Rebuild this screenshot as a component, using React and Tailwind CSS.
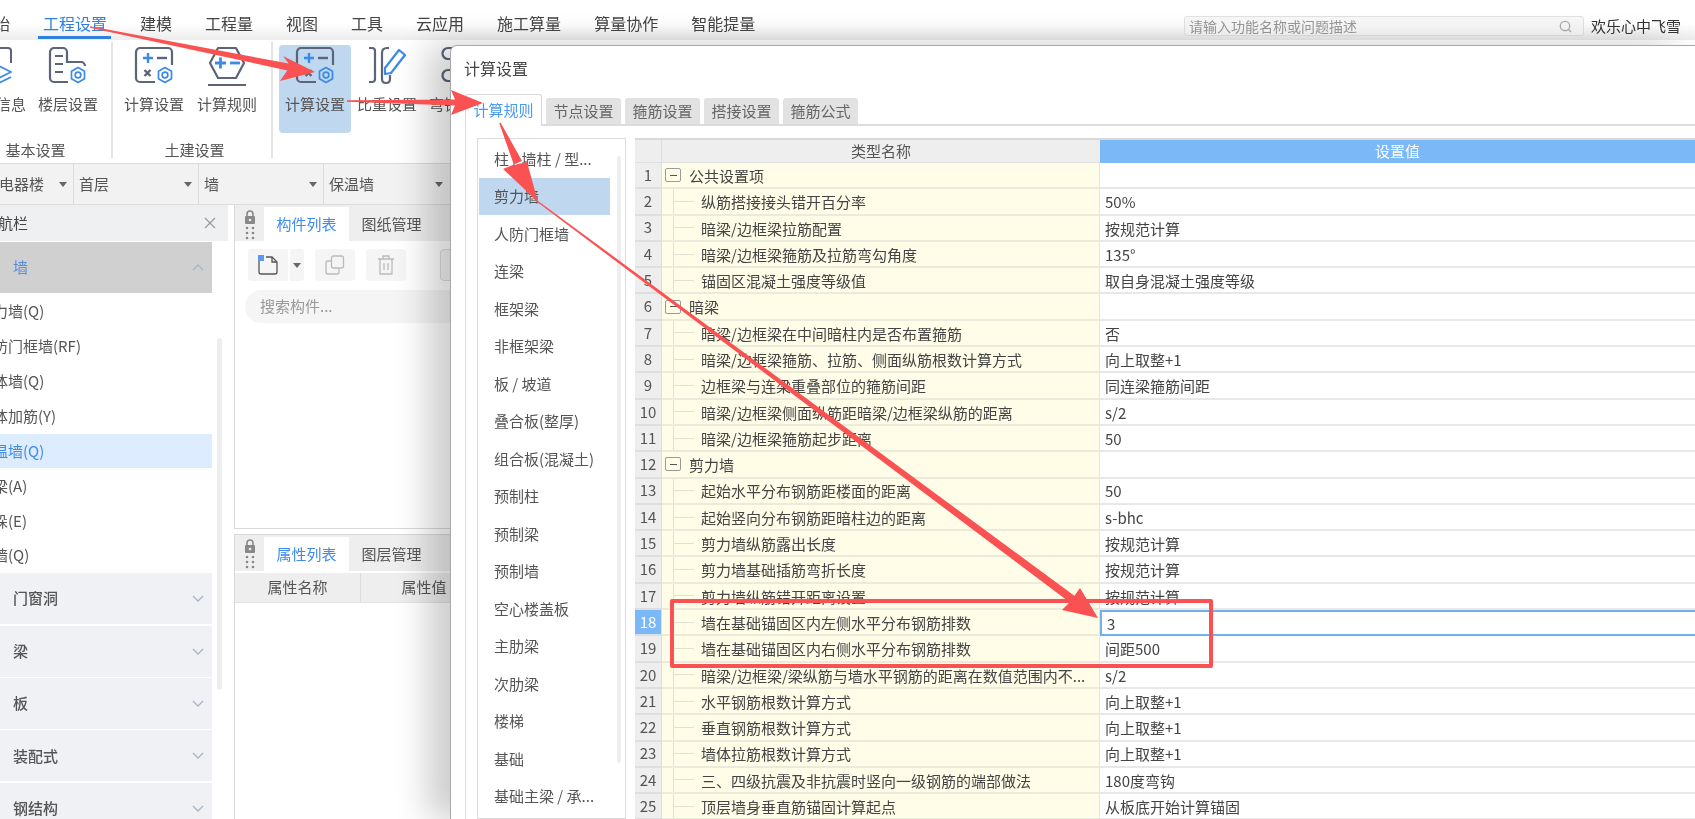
import React from "react";

const FONT = '"Noto Sans CJK SC","Noto Sans",sans-serif';

const gray = "#5c6478";
const blue = "#3b8ae6";

function Gear({ x, y, r = 7.5 }) {
  const pts = [];
  for (let i = 0; i < 6; i++) {
    const a = (Math.PI / 3) * i + Math.PI / 6;
    pts.push(`${(x + r * Math.cos(a)).toFixed(1)},${(y + r * Math.sin(a)).toFixed(1)}`);
  }
  return (
    <g fill="none" stroke={blue} strokeWidth="1.7" strokeLinejoin="round">
      <polygon points={pts.join(" ")} />
      <circle cx={x} cy={y} r={r * 0.38} />
    </g>
  );
}

function IconInfo() {
  return (
    <svg width="40" height="40" viewBox="0 0 40 40" fill="none">
      <path d="M35 17V5a3 3 0 0 0-3-3H18" stroke={gray} strokeWidth="2" />
      <path d="M11 26l12-6 12 6-12 6z" stroke={blue} strokeWidth="1.8" strokeLinejoin="round" />
      <path d="M11 31l12 6 12-6" stroke={blue} strokeWidth="1.8" />
    </svg>
  );
}
function IconFloor() {
  return (
    <svg width="40" height="40" viewBox="0 0 40 40" fill="none">
      <path d="M20 36H6a4 4 0 0 1-4-4V6a4 4 0 0 1 4-4h9a4 4 0 0 1 4 4v10h14a4 4 0 0 1 4 4" stroke={gray} strokeWidth="2.2" />
      <path d="M7 10h8M7 18h8M7 26h8" stroke={gray} strokeWidth="2.2" />
      <Gear x={30} y={29} />
    </svg>
  );
}
function IconCalc() {
  return (
    <svg width="40" height="40" viewBox="0 0 40 40" fill="none">
      <path d="M21 36H6a4 4 0 0 1-4-4V6a4 4 0 0 1 4-4h28a4 4 0 0 1 4 4v13" stroke={gray} strokeWidth="2.2" />
      <path d="M9 12h10M14 7v10" stroke={blue} strokeWidth="2.4" />
      <path d="M23 12h10" stroke={gray} strokeWidth="2.4" />
      <path d="M10.5 24l6 6M16.5 24l-6 6" stroke={gray} strokeWidth="2.4" />
      <Gear x={31} y={29} />
    </svg>
  );
}
function IconRule() {
  return (
    <svg width="40" height="40" viewBox="0 0 40 40" fill="none">
      <path d="M11 2h18l8 15-8 15H11L3 17z" stroke={gray} strokeWidth="2.2" strokeLinejoin="round" />
      <path d="M8 17h11M13.500 11.500v11" stroke={blue} strokeWidth="2.8" />
      <path d="M23 17h10" stroke={blue} strokeWidth="2.8" />
      <path d="M1 39h38" stroke={gray} strokeWidth="2.2" />
    </svg>
  );
}
function IconDensity() {
  return (
    <svg width="40" height="40" viewBox="0 0 40 40" fill="none">
      <path d="M2 2h3c2 0 3 1 3 3v28c0 2-1 3-3 3H2" stroke={gray} strokeWidth="2.2" />
      <path d="M22 2h-2c-3 0-5 2-5 5v26c0 3 2 4 4 4s4-1 4-4v-4" stroke={gray} strokeWidth="2.2" />
      <path d="M18 22L32 4l6 5-14 18-6 1z" stroke={blue} strokeWidth="2.2" strokeLinejoin="round" />
    </svg>
  );
}
function IconHook() {
  return (
    <svg width="40" height="40" viewBox="0 0 40 40" fill="none">
      <path d="M22 2H9a5.500 5.500 0 0 0 0 11h14M22 24H9a5.500 5.500 0 0 0 0 11h14" stroke={gray} strokeWidth="2.2" />
    </svg>
  );
}

function Caret({ className = "" }) {
  return (
    <svg width="8" height="5" viewBox="0 0 8 5" className={className}>
      <path d="M0 0h8L4 5z" fill="#666" />
    </svg>
  );
}

function Lock() {
  return (
    <svg width="12" height="30" viewBox="0 0 12 30" fill="#888">
      <path d="M3 6V4a3 3 0 0 1 6 0v2" fill="none" stroke="#888" strokeWidth="1.6" />
      <rect x="1" y="6" width="10" height="8" rx="1" />
      <circle cx="6" cy="10" r="1.3" fill="#eee" />
      <circle cx="3" cy="18" r="1.3" />
      <circle cx="9" cy="18" r="1.3" />
      <circle cx="3" cy="23" r="1.3" />
      <circle cx="9" cy="23" r="1.3" />
      <circle cx="3" cy="28" r="1.3" />
      <circle cx="9" cy="28" r="1.3" />
    </svg>
  );
}

function RibbonItem({ icon, label, active }) {
  return (
    <div className={`w-[72px] h-[88px] flex flex-col items-center pt-[2px] rounded ${active ? "bg-[#c0d7f0]" : ""}`}>
      <div className="h-[38px] flex items-center justify-center">{icon}</div>
      <div className="mt-[9px] text-[15px] leading-[20px] text-[#555] whitespace-nowrap">{label}</div>
    </div>
  );
}

function RibbonGroup({ label, children, className = "", rowClass = "" }) {
  return (
    <div className={`h-[116px] mt-[2px] border-r-2 border-[#e4e4e4] flex flex-col shrink-0 ${className}`}>
      <div className={`flex mt-[3px] ${rowClass}`}>{children}</div>
      <div className="mt-[7px] text-center text-[15px] leading-[20px] text-[#555] whitespace-nowrap">{label}</div>
    </div>
  );
}

function Chevron({ up }) {
  return (
    <svg width="12" height="7" viewBox="0 0 12 7" fill="none">
      <path d={up ? "M1 6l5-5 5 5" : "M1 1l5 5 5-5"} stroke="#a8b4cc" strokeWidth="1.3" />
    </svg>
  );
}

const navItems = ["剪力墙(Q)", "人防门框墙(RF)", "砌体墙(Q)", "砌体加筋(Y)", "保温墙(Q)", "暗梁(A)", "墙垛(E)", "幕墙(Q)"];
const navGroups = ["门窗洞", "梁", "板", "装配式", "钢结构", "土方"];

const listItems = ["柱 / 墙柱 / 型...", "剪力墙", "人防门框墙", "连梁", "框架梁", "非框架梁", "板 / 坡道", "叠合板(整厚)", "组合板(混凝土)", "预制柱", "预制梁", "预制墙", "空心楼盖板", "主肋梁", "次肋梁", "楼梯", "基础", "基础主梁 / 承..."];

const rows = [
  ["公共设置项", "", true],
  ["纵筋搭接接头错开百分率", "50%"],
  ["暗梁/边框梁拉筋配置", "按规范计算"],
  ["暗梁/边框梁箍筋及拉筋弯勾角度", "135°"],
  ["锚固区混凝土强度等级值", "取自身混凝土强度等级"],
  ["暗梁", "", true],
  ["暗梁/边框梁在中间暗柱内是否布置箍筋", "否"],
  ["暗梁/边框梁箍筋、拉筋、侧面纵筋根数计算方式", "向上取整+1"],
  ["边框梁与连梁重叠部位的箍筋间距", "同连梁箍筋间距"],
  ["暗梁/边框梁侧面纵筋距暗梁/边框梁纵筋的距离", "s/2"],
  ["暗梁/边框梁箍筋起步距离", "50"],
  ["剪力墙", "", true],
  ["起始水平分布钢筋距楼面的距离", "50"],
  ["起始竖向分布钢筋距暗柱边的距离", "s-bhc"],
  ["剪力墙纵筋露出长度", "按规范计算"],
  ["剪力墙基础插筋弯折长度", "按规范计算"],
  ["剪力墙纵筋错开距离设置", "按规范计算"],
  ["墙在基础锚固区内左侧水平分布钢筋排数", "3"],
  ["墙在基础锚固区内右侧水平分布钢筋排数", "间距500"],
  ["暗梁/边框梁/梁纵筋与墙水平钢筋的距离在数值范围内不...", "s/2"],
  ["水平钢筋根数计算方式", "向上取整+1"],
  ["垂直钢筋根数计算方式", "向上取整+1"],
  ["墙体拉筋根数计算方式", "向上取整+1"],
  ["三、四级抗震及非抗震时竖向一级钢筋的端部做法", "180度弯钩"],
  ["顶层墙身垂直筋锚固计算起点", "从板底开始计算锚固"],
];

function Row({ n, name, value, group }) {
  const sel = n === 18;
  return (
    <div className="flex h-[26.3px] shrink-0">
      <div className={`w-[27px] shrink-0 flex items-center justify-center text-[15px] border-b-2 border-r border-[#dedede] ${sel ? "bg-[#7ab8f8] text-white" : "bg-[#eeeeee] text-[#555]"}`}>{n}</div>
      <div className="w-[438px] shrink-0 flex items-center bg-[#fffde8] border-b-2 border-r border-b-[#ebebdc] border-r-[#e4e4e4] text-[15px] text-[#444] whitespace-nowrap">
        {group ? (
          <>
            <div className="ml-[3px] w-[16px] h-[14px] border border-[#9a9a9a] rounded-[2px] flex items-center justify-center">
              <div className="w-[7px] h-px bg-[#555]" />
            </div>
            <span className="ml-[8px] pt-[2px]">{name}</span>
          </>
        ) : (
          <>
            <div className="ml-[11px] h-full border-l border-[#e2e1cf]" />
            <div className="w-[20px] h-px bg-[#e2e1cf]" />
            <span className="ml-[7px] pt-[2px]">{name}</span>
          </>
        )}
      </div>
      <div className={`flex-1 flex items-center text-[15px] text-[#444] pl-[5px] pt-[2px] ${sel ? "border-y-2 border-l-2 border-[#6fb0f0]" : "border-b-2 border-[#e8e8e8]"}`}>{value}</div>
    </div>
  );
}

function Arrow({ s, t, a, b, sw, nw, neck }) {
  const dx = t[0] - s[0];
  const dy = t[1] - s[1];
  const len = Math.hypot(dx, dy);
  const nx = -dy / len;
  const ny = dx / len;
  const p = [
    [s[0] - (nx * sw) / 2, s[1] - (ny * sw) / 2],
    [neck[0] - (nx * nw) / 2, neck[1] - (ny * nw) / 2],
    a,
    t,
    b,
    [neck[0] + (nx * nw) / 2, neck[1] + (ny * nw) / 2],
    [s[0] + (nx * sw) / 2, s[1] + (ny * sw) / 2],
  ];
  return <polygon points={p.map((q) => q.join(",")).join(" ")} fill="#fa5252" />;
}

export default function App() {
  return (
    <div className="relative w-[1695px] h-[819px] overflow-hidden bg-white flex flex-col blur-[0.4px]" style={{ fontFamily: FONT }}>
      {/* menu bar */}
      <div className="h-[40px] shrink-0 flex items-center bg-gradient-to-b from-white from-60% to-[#ececec] text-[16px] text-[#444]">
        <div className="flex gap-[33px] ml-[-22px] whitespace-nowrap h-full">
          <span className="leading-[46px]">开始</span>
          <span className="leading-[46px] text-[#2f80e0] relative">
            工程设置
            <span className="absolute left-[-5px] right-[-4px] top-[36px] h-[3px] bg-[#2f80e0]" />
          </span>
          {["建模", "工程量", "视图", "工具", "云应用", "施工算量", "算量协作", "智能提量"].map((m) => (
            <span key={m} className="leading-[46px]">{m}</span>
          ))}
        </div>
        <div className="ml-auto flex items-center mt-[12px]">
          <div className="w-[400px] h-[20px] border border-[#e2e2e2] rounded-[3px] bg-[#f8f8f8] flex items-center justify-between pl-[4px] pr-[11px] text-[14px] text-[#999]">
            <span>请输入功能名称或问题描述</span>
            <svg width="13" height="13" viewBox="0 0 13 13" fill="none">
              <circle cx="6" cy="6" r="4.700" stroke="#aaa" strokeWidth="1.300" />
              <path d="M9.500 9.500L12 12" stroke="#aaa" strokeWidth="1.300" />
            </svg>
          </div>
          <span className="ml-[7px] mr-[14px] text-[15px] text-[#333] whitespace-nowrap">欢乐心中飞雪</span>
        </div>
      </div>

      {/* ribbon */}
      <div className="h-[123px] shrink-0 flex ml-[-40px]">
        <RibbonGroup label="基本设置" className="w-[153px] pl-0">
          <RibbonItem icon={<IconInfo />} label="工程信息" />
          <RibbonItem icon={<IconFloor />} label="楼层设置" />
        </RibbonGroup>
        <RibbonGroup label="土建设置" className="w-[160px] pl-[5px]" rowClass="gap-[1px]">
          <RibbonItem icon={<IconCalc />} label="计算设置" />
          <RibbonItem icon={<IconRule />} label="计算规则" />
        </RibbonGroup>
        <div className="flex pl-[6px] mt-[5px]">
          <RibbonItem active icon={<IconCalc />} label="计算设置" />
          <RibbonItem icon={<IconDensity />} label="比重设置" />
          <RibbonItem icon={<IconHook />} label="弯钩设置" />
        </div>
      </div>

      {/* selector row */}
      <div className="h-[42px] shrink-0 flex ml-[-21px] bg-[#f2f2f2] border-y border-[#dcdcdc] text-[15px] text-[#555]">
        {[["配电器楼", "w-[95px] pr-[6px] border-r"], ["首层", "w-[125px] pr-[6px] border-r"], ["墙", "w-[125px] pr-[6px] border-r"], ["保温墙", "w-[140px] pr-[21px]"]].map(([t, w]) => (
          <div key={t} className={`${w} shrink-0 flex items-center justify-between pl-[5px] border-[#dcdcdc]`}>
            <span className="whitespace-nowrap">{t}</span>
            <Caret />
          </div>
        ))}
      </div>

      {/* body */}
      <div className="flex-1 flex min-h-0">
        {/* navigation */}
        <div className="w-[268px] ml-[-40px] shrink-0 flex flex-col overflow-hidden">
          <div className="h-[36px] shrink-0 bg-[#eff0f2] flex items-center justify-between pl-[23px] pr-[12px] text-[15px] text-[#444]">
            <span>导航栏</span>
            <svg width="12" height="12" viewBox="0 0 12 12" fill="none">
              <path d="M1 1l10 10M11 1L1 11" stroke="#9a9a9a" strokeWidth="1.200" />
            </svg>
          </div>
          <div className="flex">
            <div className="w-[252px] shrink-0 flex flex-col mt-[1px]">
              <div className="h-[51px] shrink-0 bg-[#d0d0d0] flex items-center justify-between pl-[53px] pr-[8px] text-[15px] text-[#5b8ddf]">
                <span>墙</span>
                <Chevron up />
              </div>
              <div className="h-[1px]" />
              {navItems.map((t) => (
                <div key={t} className={`h-[34.9px] shrink-0 flex items-center pl-[18px] text-[15px] whitespace-nowrap ${t === "保温墙(Q)" ? "bg-[#ddecff] text-[#3f8be8]" : "text-[#555]"}`}>{t}</div>
              ))}
              {navGroups.map((t) => (
                <div key={t} className="h-[51px] mb-[1.400px] shrink-0 bg-[#eff1f5] flex items-center justify-between pl-[53px] pr-[8px] text-[15px] font-medium text-[#555]">
                  <span>{t}</span>
                  <Chevron />
                </div>
              ))}
            </div>
            <div className="ml-[5px] mt-[97px] w-[5px] h-[352px] rounded bg-[#eeeeee] shrink-0" />
          </div>
        </div>

        {/* panels */}
        <div className="ml-[6px] flex-1 flex flex-col min-w-0">
          <div className="h-[324px] shrink-0 border-l border-b border-[#d8d8d8] flex flex-col">
            <div className="h-[36px] shrink-0 bg-[#eeeeee] flex items-end text-[15px] text-[#555]">
              <div className="w-[29px] h-full flex justify-center pt-[5px]"><Lock /></div>
              <div className="w-[85px] h-[34px] bg-white text-[#3f8be8] flex items-center justify-center">构件列表</div>
              <div className="w-[85px] h-[34px] flex items-center justify-center">图纸管理</div>
            </div>
            <div className="flex pl-[13px] mt-[8px] gap-[11px]">
              <div className="flex gap-[2px]">
                <div className="w-[40px] h-[32px] bg-[#f5f5f5] rounded-l flex items-center justify-center">
                  <svg width="20" height="20" viewBox="0 0 20 20" fill="none">
                    <path d="M1 2v15a2 2 0 0 0 2 2h14a2 2 0 0 0 2-2V7l-5-5H8" stroke="#555" strokeWidth="1.300" />
                    <path d="M14 2v5h5" stroke="#555" strokeWidth="1.300" />
                    <rect x="0" y="0" width="6" height="6" fill="#5f97ea" />
                  </svg>
                </div>
                <div className="w-[14px] h-[32px] bg-[#f5f5f5] rounded-r flex items-center justify-center"><Caret /></div>
              </div>
              <div className="w-[40px] h-[32px] bg-[#f5f5f5] rounded flex items-center justify-center">
                <svg width="20" height="20" viewBox="0 0 20 20" fill="none">
                  <rect x="6.500" y="1" width="12" height="12" rx="2" stroke="#bbb" strokeWidth="1.300" />
                  <path d="M6 6H3a2 2 0 0 0-2 2v9a2 2 0 0 0 2 2h9a2 2 0 0 0 2-2v-3" stroke="#bbb" strokeWidth="1.300" />
                </svg>
              </div>
              <div className="w-[40px] h-[32px] bg-[#f5f5f5] rounded flex items-center justify-center">
                <svg width="18" height="20" viewBox="0 0 18 20" fill="none" stroke="#bbb" strokeWidth="1.300">
                  <path d="M1 4h16M6 4V1h6v3M3 4v15h12V4M7 8v7M11 8v7" />
                </svg>
              </div>
              <div className="ml-[23px] w-[40px] h-[32px] bg-[#f5f5f5] border border-[#ddd] rounded" />
            </div>
            <div className="mt-[9px] ml-[10px] h-[33px] w-[240px] rounded-full bg-[#f5f5f5] flex items-center justify-between pl-[15px] pr-[16px] text-[15px] text-[#999]">
              <span>搜索构件...</span>
              <svg width="13" height="13" viewBox="0 0 13 13" fill="none">
                <circle cx="6" cy="6" r="4.700" stroke="#aaa" strokeWidth="1.300" />
                <path d="M9.500 9.500L12 12" stroke="#aaa" strokeWidth="1.300" />
              </svg>
            </div>
          </div>
          <div className="mt-[5px] flex-1 border-l border-t border-[#d8d8d8] flex flex-col">
            <div className="h-[36px] shrink-0 bg-[#eeeeee] flex items-end text-[15px] text-[#555]">
              <div className="w-[29px] h-full flex justify-center pt-[4px]"><Lock /></div>
              <div className="w-[85px] h-[34px] bg-white text-[#3f8be8] flex items-center justify-center">属性列表</div>
              <div className="w-[85px] h-[34px] flex items-center justify-center">图层管理</div>
            </div>
            <div className="mt-[2px] h-[30px] shrink-0 bg-[#eeeeee] border-b border-[#e2e2e2] flex text-[15px] text-[#555]">
              <div className="w-[126px] flex items-center justify-center border-r border-[#ddd]">属性名称</div>
              <div className="w-[126px] flex items-center justify-center">属性值</div>
            </div>
          </div>
        </div>
      </div>

      {/* dialog window */}
      <div className="absolute left-[450px] top-[45px] right-0 bottom-0 bg-white rounded-tl-[7px] border-l border-t border-[#a8a8a8] shadow-[-22px_0_34px_rgba(0,0,0,0.2)] flex flex-col">
        <div className="h-[48px] shrink-0 flex items-center pl-[13px] pb-[4px] text-[16px] text-[#444]">计算设置</div>
        <div className="h-[32px] shrink-0 flex items-end pl-[14px] text-[15px] text-[#666] whitespace-nowrap">
          <div className="w-[77px] h-[32px] bg-white border border-b-0 border-[#d8d8d8] rounded-t-[3px] text-[#4a9af5] flex items-center justify-center">计算规则</div>
          <div className="flex-1 flex items-end gap-[4px] pl-[4px] border-b-2 border-[#dcdcdc] h-full">
            {["节点设置", "箍筋设置", "搭接设置", "箍筋公式"].map((t) => (
              <div key={t} className="w-[75px] h-[26px] bg-[#e2e2e2] rounded-t-[3px] flex items-center justify-center">{t}</div>
            ))}
          </div>
        </div>
        <div className="flex-1 min-h-0 ml-[14px] border-l border-[#dcdcdc] pt-[12px] pl-[11px] flex overflow-hidden">
          <div className="w-[149px] shrink-0 border border-[#dcdcdc] relative pt-[1px] pl-[1px]">
            {listItems.map((t) => (
              <div key={t} className={`w-[131px] h-[37.5px] flex items-center pl-[15px] text-[15px] text-[#555] whitespace-nowrap ${t === "剪力墙" ? "bg-[#c0d7f0]" : ""}`}>{t}</div>
            ))}
            <div className="absolute left-[139px] top-[17px] w-[4px] h-[607px] bg-[#eeeeee] rounded" />
          </div>
          <div className="ml-[9px] flex-1 min-w-0 flex flex-col">
            <div className="flex h-[25px] shrink-0 border-t-2 border-[#d8d8d8] text-[15px]">
              <div className="w-[27px] bg-[#eeeeee] border-r border-b border-[#dedede]" />
              <div className="w-[438px] bg-[#eeeeee] border-b border-[#dedede] flex items-center justify-center text-[#555]">类型名称</div>
              <div className="flex-1 bg-[#7ab8f8] text-white flex items-center justify-center">设置值</div>
            </div>
            {rows.map((r, i) => (
              <Row key={i} n={i + 1} name={r[0]} value={r[1]} group={r[2]} />
            ))}
          </div>
        </div>
      </div>

      {/* red annotations */}
      <svg className="absolute inset-0 pointer-events-none" width="1695" height="819" viewBox="0 0 1695 819">
        <Arrow s={[90, 27]} t={[315, 72]} a={[283, 56]} b={[280, 81]} sw={1.5} nw={7} neck={[288, 67]} />
        <Arrow s={[347, 101]} t={[483, 103]} a={[451, 90]} b={[451, 115]} sw={1.5} nw={6} neck={[455, 102.5]} />
        <Arrow s={[500, 123]} t={[538, 202]} a={[503, 169]} b={[527, 162]} sw={1.5} nw={9} neck={[518, 163]} />
        <Arrow s={[537, 201]} t={[1098, 618]} a={[1080, 588]} b={[1062, 610]} sw={1.5} nw={8} neck={[1072, 599]} />
      </svg>
      <div className="absolute left-[670px] top-[599px] w-[543px] h-[69px] border-[4px] border-[#fa5252] rounded-[2px] pointer-events-none" />
    </div>
  );
}
